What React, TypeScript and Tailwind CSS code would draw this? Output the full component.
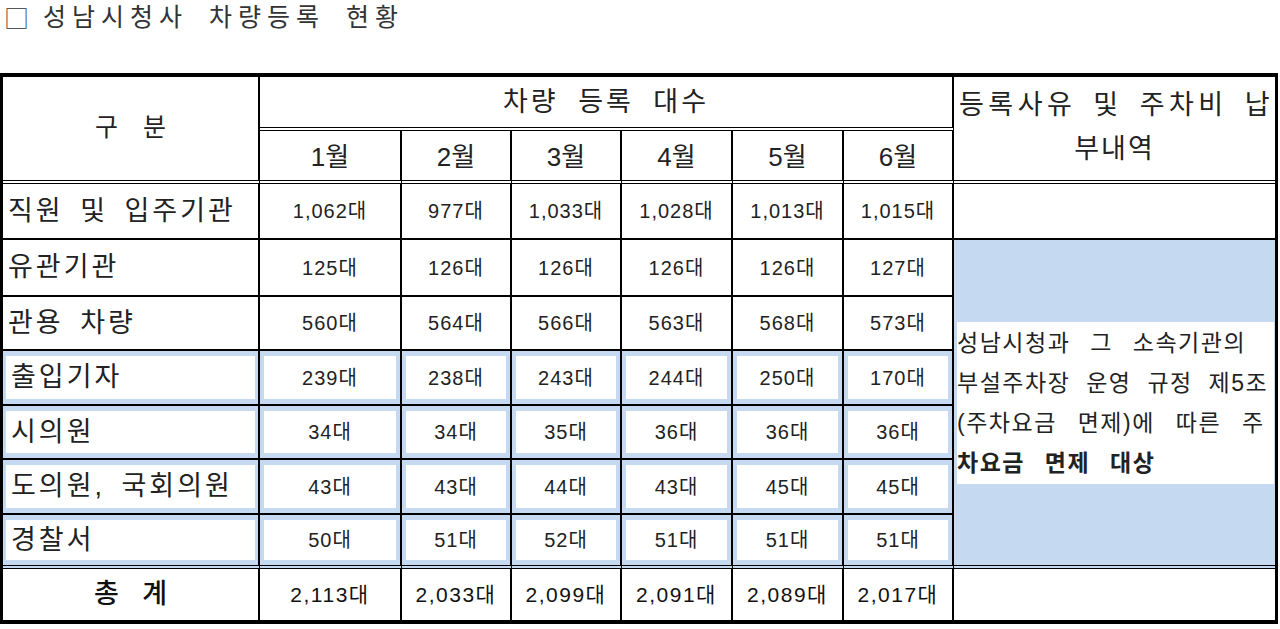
import React from "react";

const FONT = "font-['Liberation_Sans','Noto_Sans_CJK_KR',sans-serif]";

const months = ["1월", "2월", "3월", "4월", "5월", "6월"];

const rows: { label: string; values: string[]; blue: boolean }[] = [
    { label: "유관기관", values: ["125대", "126대", "126대", "126대", "126대", "127대"], blue: false },
    { label: "관용 차량", values: ["560대", "564대", "566대", "563대", "568대", "573대"], blue: false },
    { label: "출입기자", values: ["239대", "238대", "243대", "244대", "250대", "170대"], blue: true },
    { label: "시의원", values: ["34대", "34대", "35대", "36대", "36대", "36대"], blue: true },
    { label: "도의원, 국회의원", values: ["43대", "43대", "44대", "43대", "45대", "45대"], blue: true },
    { label: "경찰서", values: ["50대", "51대", "52대", "51대", "51대", "51대"], blue: true },
];

const staff = ["1,062대", "977대", "1,033대", "1,028대", "1,013대", "1,015대"];
const totals = ["2,113대", "2,033대", "2,099대", "2,091대", "2,089대", "2,017대"];

function BodyCell({ children, blue, label, last }: { children: React.ReactNode; blue: boolean; label?: boolean; last?: boolean }) {
    const edge = last
        ? "border-r-2 border-b-4 border-black [border-bottom-style:double]"
        : "border-r-2 border-b-2 border-black";
    const text = label
        ? "justify-start pl-[5px] text-[27px] tracking-[3px] [word-spacing:6px] whitespace-nowrap"
        : "justify-center text-[20px] tracking-[1px]";
    if (!blue) {
        return <div className={`${edge} flex items-center ${text} text-[#222]`}>{children}</div>;
    }
    return (
        <div className={`${edge} bg-[#c5d9f1] ${label ? "px-[3px]" : "px-[4px]"} py-[5px]`}>
            <div className={`h-full bg-white flex items-center ${text} text-[#222]`}>{children}</div>
        </div>
    );
}

export default function App() {
    return (
        <div className={`w-[1280px] h-[629px] bg-white overflow-hidden ${FONT}`}>
            {/* Title */}
            <div className="h-[73px]">
                <div className="flex items-center h-[36px] pl-[4px] text-[25px] text-[#333] whitespace-nowrap">
                    <span className="font-['Noto_Sans_CJK_KR',sans-serif] font-light">□</span>
                    <span className="ml-[14px] tracking-[6px] [word-spacing:8px]">성남시청사 차량등록 현황</span>
                </div>
            </div>

            {/* Table */}
            <div className="w-[1278px] border-t-4 border-b-4 border-l-[3px] border-r-[3px] border-black grid grid-cols-[257px_142px_110px_110px_111px_111px_110px_321px] grid-rows-[54px_53px_56px_57px_54px_55px_54px_55px_54px_51px]">
                {/* Header */}
                <div className="row-span-2 border-r-2 border-b-4 border-black [border-bottom-style:double] flex items-center justify-center text-[25px] text-[#222] [word-spacing:18px] pb-[2px]">
                    구 분
                </div>
                <div className="col-span-6 border-r-2 border-b-4 border-black [border-bottom-style:double] flex items-center justify-center text-[27px] tracking-[3px] [word-spacing:9px] text-[#222]">
                    차량 등록 대수
                </div>
                <div className="row-span-2 border-b-4 border-black [border-bottom-style:double] flex flex-col items-center justify-center text-[27px] leading-[44px] text-[#222] pb-[3px]">
                    <span className="tracking-[4.5px] [word-spacing:5px] whitespace-nowrap pl-[4px]">등록사유 및 주차비 납</span>
                    <span className="tracking-[2px]">부내역</span>
                </div>
                {months.map((m) => (
                    <div
                        key={m}
                        className="border-r-2 border-b-4 border-black [border-bottom-style:double] flex items-center justify-center text-[26px] text-[#222] pt-[3px]"
                    >
                        {m}
                    </div>
                ))}

                {/* 직원 및 입주기관 */}
                <BodyCell blue={false} label>직원 및 입주기관</BodyCell>
                {staff.map((v, i) => (
                    <BodyCell key={i} blue={false}>{v}</BodyCell>
                ))}
                <div className="border-b-2 border-black" />

                {rows.map((r, ri) => (
                    <React.Fragment key={r.label}>
                        <BodyCell blue={r.blue} label last={ri === rows.length - 1}>{r.label}</BodyCell>
                        {r.values.map((v, i) => (
                            <BodyCell key={i} blue={r.blue} last={ri === rows.length - 1}>{v}</BodyCell>
                        ))}
                        {ri === 0 && (
                            <div className="row-span-6 border-b-4 border-black [border-bottom-style:double] bg-[#c5d9f1] flex items-center pl-[3px] pr-[1px]">
                                <div className="w-full h-[162px] bg-white flex flex-col justify-center text-[23px] leading-[40px] tracking-[1.5px] text-[#222] whitespace-nowrap">
                                    <span className="[word-spacing:12px]">성남시청과 그 소속기관의</span>
                                    <span className="[word-spacing:8px]">부설주차장 운영 규정 제5조</span>
                                    <span className="[word-spacing:13px]">(주차요금 면제)에 따른 주</span>
                                    <span className="font-bold [word-spacing:12px]">차요금 면제 대상</span>
                                </div>
                            </div>
                        )}
                    </React.Fragment>
                ))}

                {/* 총계 */}
                <div className="border-r-2 border-black flex items-center justify-center text-[27px] font-medium text-[#111] [word-spacing:16px]">
                    총 계
                </div>
                {totals.map((v, i) => (
                    <div key={i} className="border-r-2 border-black flex items-center justify-center text-[21px] tracking-[1.5px] text-[#111]">
                        {v}
                    </div>
                ))}
                <div />
            </div>
        </div>
    );
}
